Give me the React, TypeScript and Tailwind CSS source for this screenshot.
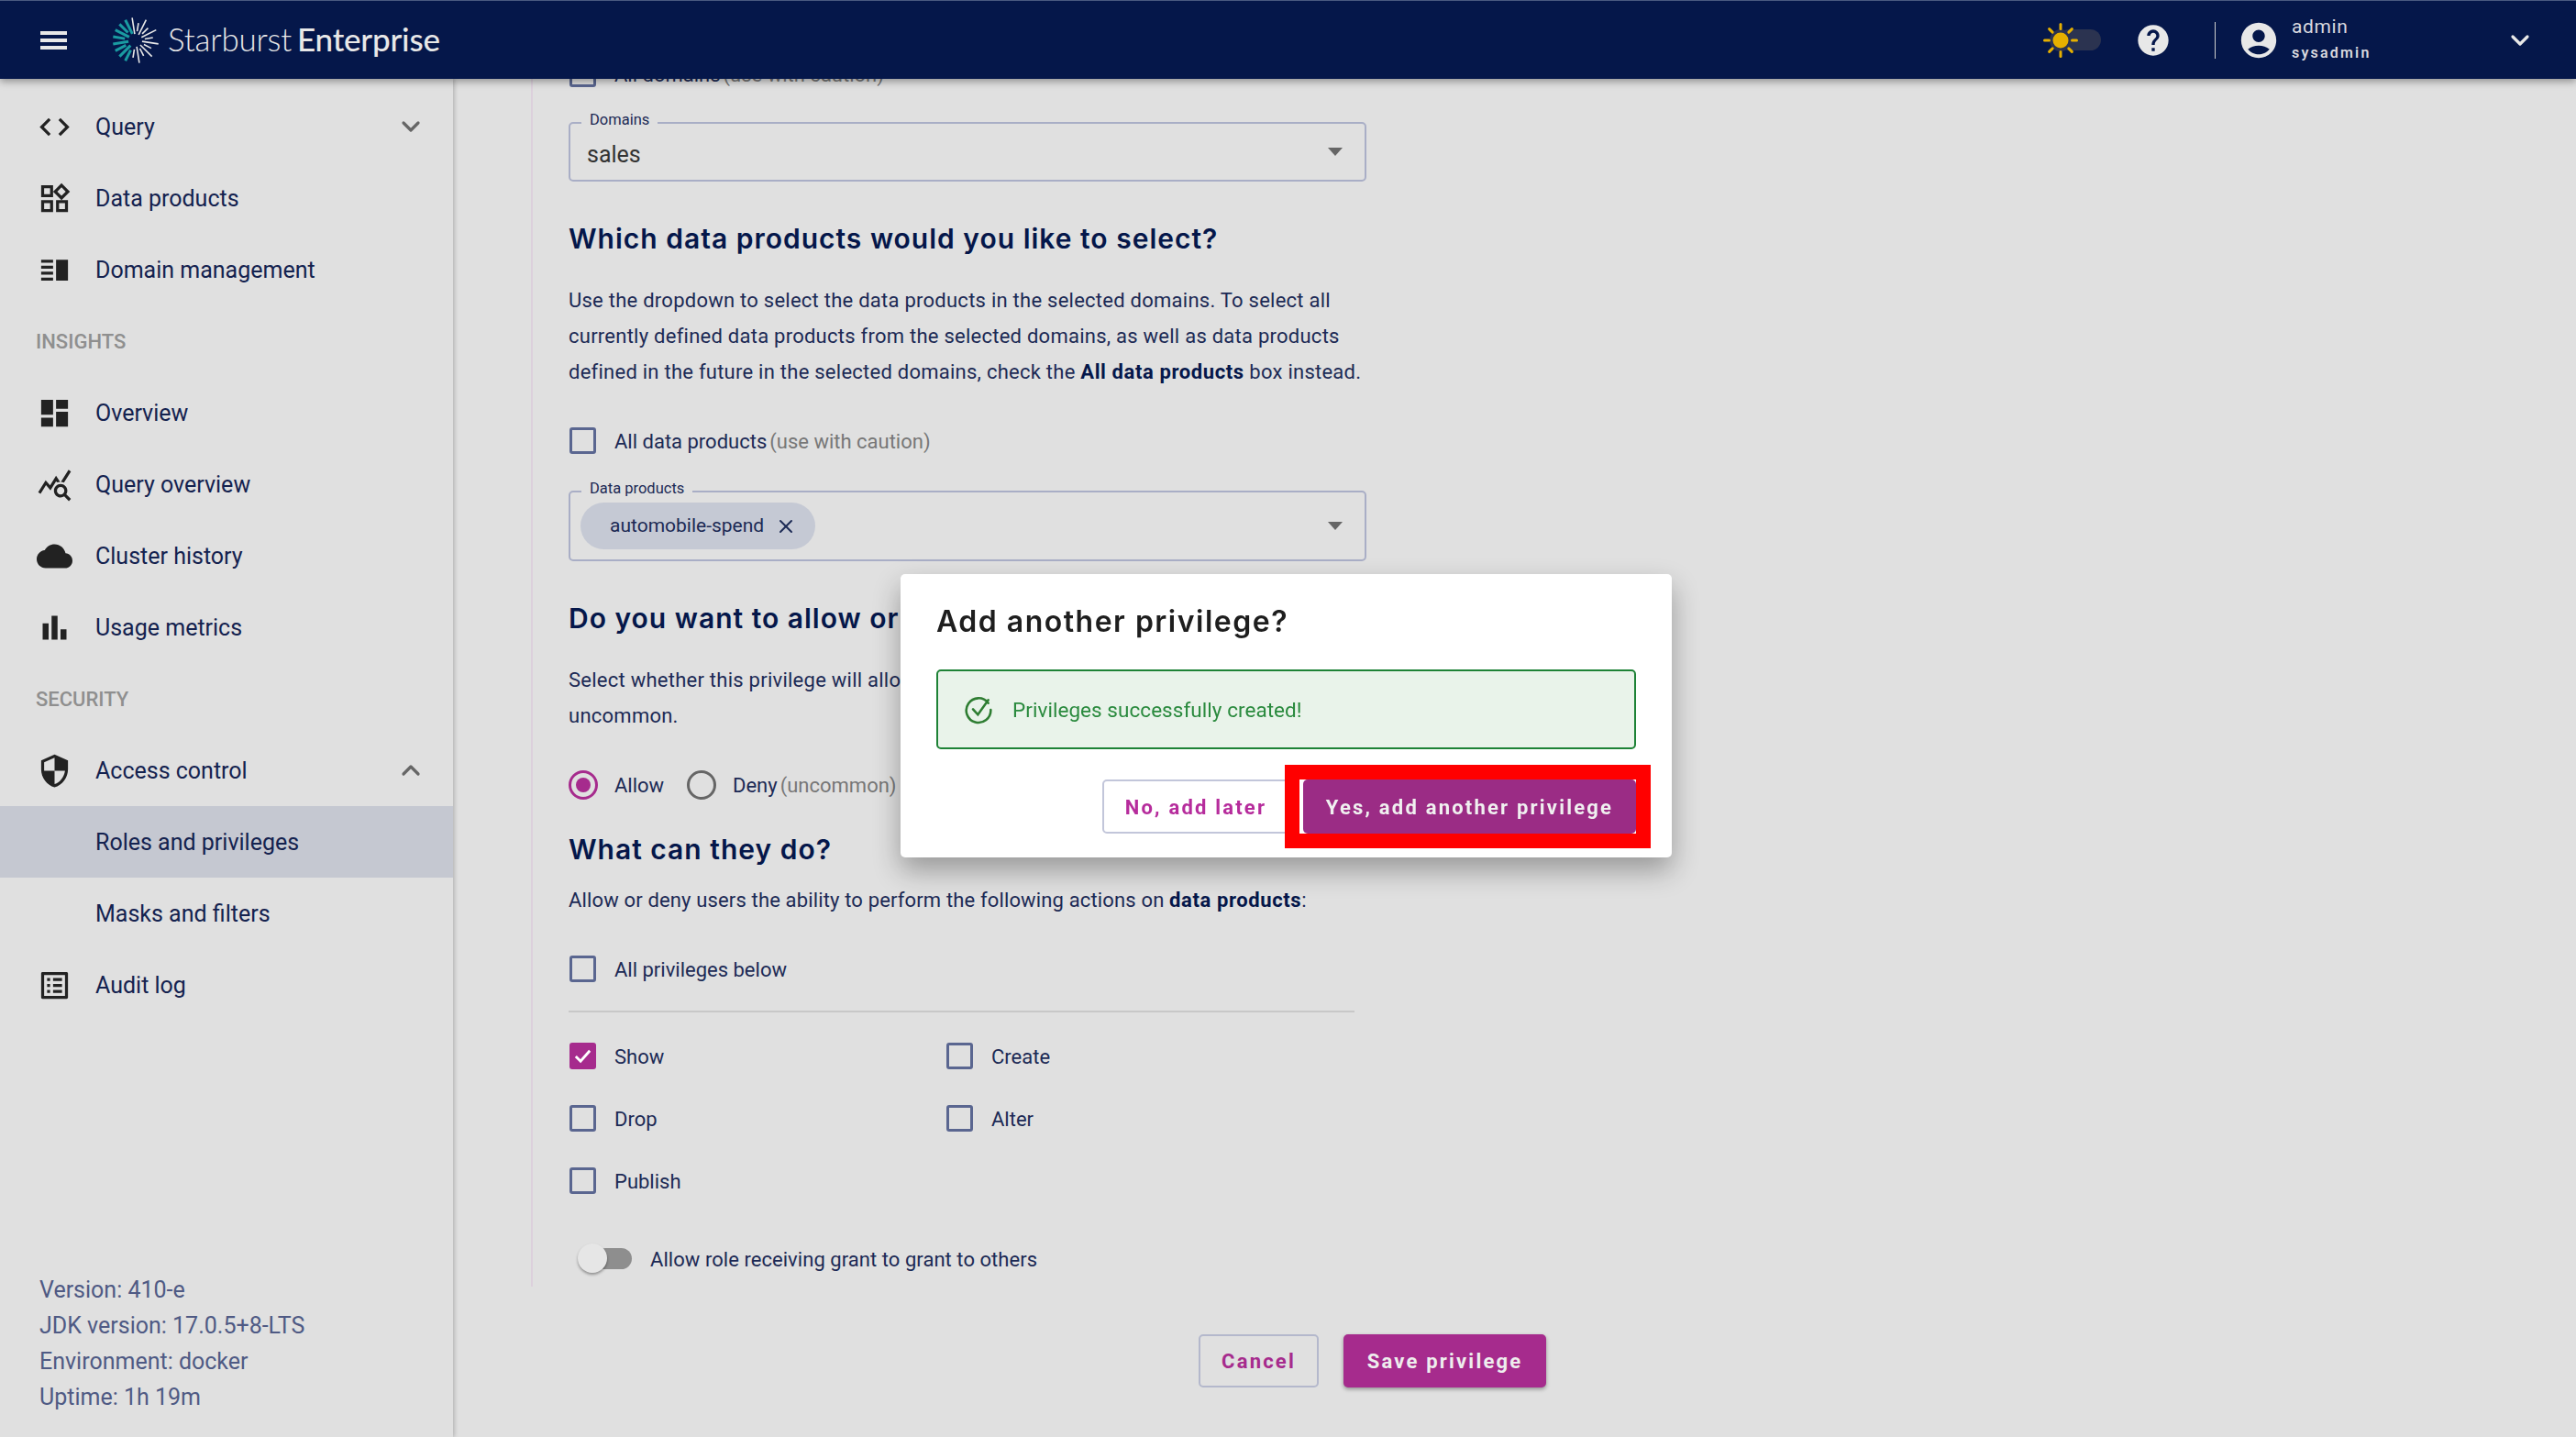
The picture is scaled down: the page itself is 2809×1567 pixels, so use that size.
import type { ReactNode } from "react";
import { ChevronDown, ChevronUp, X } from "lucide-react";

// logo rays: teal on the left side, thin white ones on the right
const burst = Array.from({ length: 20 }, (_, i) => {
  const deg = -99 + i * 18;
  const a = (deg * Math.PI) / 180;
  const teal = deg > 100;
  const r1 = teal ? (i % 2 ? 8 : 12) : i % 2 ? 10 : 7;
  const r2 = teal ? 25 : i % 2 ? 19 : 25;
  return {
    x1: 26 + Math.cos(a) * r1,
    y1: 26 + Math.sin(a) * r1,
    x2: 26 + Math.cos(a) * r2,
    y2: 26 + Math.sin(a) * r2,
    teal,
  };
});

function MatIcon({ d, size = 39, className = "" }: { d: string; size?: number; className?: string }) {
  return (
    <svg width={size} height={size} viewBox="0 0 24 24" fill="currentColor" className={className}>
      <path d={d} />
    </svg>
  );
}

const icons = {
  code: "M9.4 16.6L4.8 12l4.6-4.6L8 6l-6 6 6 6 1.4-1.4zm5.2 0l4.6-4.6-4.6-4.6L16 6l6 6-6 6-1.4-1.4z",
  widgets:
    "M16.66 4.52l2.83 2.83-2.83 2.83-2.83-2.83 2.83-2.83M9 5v4H5V5h4m10 10v4h-4v-4h4M9 15v4H5v-4h4m7.66-13.31L11 7.34 16.66 13l5.66-5.66-5.66-5.65zM11 3H3v8h8V3zm10 10h-8v8h8v-8zm-10 0H3v8h8v-8z",
  split: "M3 15h8v-2H3v2zm0 4h8v-2H3v2zm0-8h8V9H3v2zm0-6v2h8V5H3zm10 0h8v14h-8V5z",
  dashboard: "M3 13h8V3H3v10zm0 8h8v-6H3v6zm10 0h8V11h-8v10zm0-18v6h8V3h-8z",
  stats:
    "M19.88 18.47c.44-.7.7-1.51.7-2.39 0-2.49-2.01-4.5-4.5-4.5s-4.5 2.01-4.5 4.5 2.01 4.5 4.49 4.5c.88 0 1.7-.26 2.39-.7L21.58 23 23 21.58l-3.12-3.11zm-3.8.11c-1.38 0-2.5-1.12-2.5-2.5s1.12-2.5 2.5-2.5 2.5 1.12 2.5 2.5-1.12 2.5-2.5 2.5zm-.36-8.5c-.74.02-1.45.18-2.1.45l-.55-.83-3.8 6.18-3.01-3.52-3.63 5.81L1 17l5-8 3 3.5L13 6l2.72 4.08zm2.59.5c-.64-.28-1.33-.45-2.05-.49L21.38 2 23 3.18l-4.69 7.4z",
  cloud:
    "M19.35 10.04C18.67 6.59 15.64 4 12 4 9.11 4 6.6 5.64 5.35 8.04 2.34 8.36 0 10.91 0 14c0 3.31 2.69 6 6 6h13c2.76 0 5-2.24 5-5 0-2.64-2.05-4.78-4.65-4.96z",
  bars: "M4 9h4v11H4zm12 4h4v7h-4zm-6-9h4v16h-4z",
  shield: "M12 1L3 5v6c0 5.55 3.84 10.74 9 12 5.16-1.26 9-6.45 9-12V5l-9-4zm0 10.99h7c-.53 4.12-3.28 7.79-7 8.94V12H5V6.3l7-3.11v8.8z",
  list: "M19 5v14H5V5h14m1.1-2H3.9c-.5 0-.9.4-.9.9v16.2c0 .4.4.9.9.9h16.2c.4 0 .9-.5.9-.9V3.9c0-.5-.5-.9-.9-.9zM11 7h6v2h-6V7zm0 4h6v2h-6v-2zm0 4h6v2h-6zM7 7h2v2H7zm0 4h2v2H7zm0 4h2v2H7z",
  help: "M12 2C6.48 2 2 6.48 2 12s4.48 10 10 10 10-4.48 10-10S17.52 2 12 2zm1 17h-2v-2h2v2zm2.07-7.75l-.9.92C13.45 12.9 13 13.5 13 15h-2v-.5c0-1.1.45-2.1 1.17-2.83l1.24-1.26c.37-.36.59-.86.59-1.41 0-1.1-.9-2-2-2s-2 .9-2 2H8c0-2.21 1.79-4 4-4s4 1.79 4 4c0 .88-.36 1.68-.93 2.25z",
  account:
    "M12 2C6.48 2 2 6.48 2 12s4.48 10 10 10 10-4.48 10-10S17.52 2 12 2zm0 4c1.93 0 3.5 1.57 3.5 3.5S13.93 13 12 13s-3.5-1.57-3.5-3.5S10.07 6 12 6zm0 14c-2.03 0-4.43-.82-6.14-2.88C7.55 15.8 9.68 15 12 15s4.45.8 6.14 2.12C16.43 19.18 14.03 20 12 20z",
};

function NavRow({ icon, label, chevron, active }: { icon?: string; label: string; chevron?: "up" | "down"; active?: boolean }) {
  return (
    <div className={`flex h-[78px] items-center pr-[30px] pl-[40px] ${active ? "bg-[#c5c8d1]" : ""}`}>
      <span className="flex w-[64px] shrink-0 text-[#222222]">{icon && <MatIcon d={icon} />}</span>
      <span className="flex-1 pt-[2px] text-[25px] text-[#14224f]">{label}</span>
      {chevron === "down" && <ChevronDown size={32} strokeWidth={2.4} className="text-[#666666]" />}
      {chevron === "up" && <ChevronUp size={32} strokeWidth={2.4} className="text-[#666666]" />}
    </div>
  );
}

function SectionLabel({ children }: { children: ReactNode }) {
  return <div className="flex h-[78px] items-center pl-[39px] text-[22px] font-medium text-[#8f8f8f]">{children}</div>;
}

function Checkbox({ checked }: { checked?: boolean }) {
  if (checked) {
    return (
      <span className="flex h-[29px] w-[29px] shrink-0 items-center justify-center rounded-[3px] bg-[#a62b8d]">
        <svg width="23" height="23" viewBox="0 0 24 24" fill="none" stroke="#ffffff" strokeWidth="3">
          <path d="M4 12.5l5.5 5.5L20 6" />
        </svg>
      </span>
    );
  }
  return <span className="h-[29px] w-[29px] shrink-0 rounded-[3px] border-[3px] border-[#5a6690]" />;
}

function CheckRow({ label, checked, note }: { label: string; checked?: boolean; note?: string }) {
  return (
    <div className="flex h-[29px] items-center gap-[20px] pl-[1px]">
      <Checkbox checked={checked} />
      <span className="pt-[1px] text-[22px] text-[#1c2a55]">
        {label}
        {note && <span className="ml-[3px] text-[#777777]">{note}</span>}
      </span>
    </div>
  );
}

function Radio({ checked }: { checked?: boolean }) {
  return (
    <span className={`flex h-[32px] w-[32px] shrink-0 items-center justify-center rounded-full border-[3px] ${checked ? "border-[#a62b8d]" : "border-[#666666]"}`}>
      {checked && <span className="h-[16px] w-[16px] rounded-full bg-[#a62b8d]" />}
    </span>
  );
}

function Caret() {
  return <span className="h-0 w-0 border-x-[8px] border-t-[9px] border-x-transparent border-t-[#666666]" />;
}

function SelectField({ label, className, children }: { label: string; className: string; children: ReactNode }) {
  return (
    <div className={`relative flex w-[870px] items-center justify-between rounded-[5px] border-2 border-[#a9aec6] pr-[24px] ${className}`}>
      <span className="absolute -top-[15px] left-[12px] bg-[#e0e0e0] px-[9px] text-[16.5px] leading-[22px] text-[#1c2a55]">{label}</span>
      {children}
      <Caret />
    </div>
  );
}

function Heading({ children, className }: { children: ReactNode; className: string }) {
  return <h2 className={`font-['Inter',sans-serif] text-[30px] leading-[40px] font-semibold tracking-[1px] whitespace-nowrap text-[#05174a] ${className}`}>{children}</h2>;
}

function Sun() {
  const rays = [0, 45, 90, 135, 180, 225, 270, 315];
  return (
    <svg width="40" height="44" viewBox="-20 -22 40 44" className="absolute top-0 left-0">
      <circle r="12" fill="#2b3350" />
      <circle r="8.5" fill="#e6b000" />
      {rays.map((deg) => (
        <line key={deg} x1="0" y1="-12.5" x2="0" y2="-17.5" stroke="#e6b000" strokeWidth="3" strokeLinecap="round" transform={`rotate(${deg})`} />
      ))}
    </svg>
  );
}

export default function App() {
  return (
    <div className="flex h-[1567px] w-full flex-col overflow-hidden bg-[#e0e0e0] font-['Roboto',sans-serif]">
      <header className="relative z-20 flex h-[86px] shrink-0 items-center border-t border-[#4a5a80] bg-[#05174a] pr-[45px] pl-[44px] shadow-[0_3px_8px_rgba(0,0,0,0.35)]">
        <div className="flex h-[20px] w-[29px] flex-col justify-between">
          <span className="h-[4px] bg-[#e8e8e8]" />
          <span className="h-[4px] bg-[#e8e8e8]" />
          <span className="h-[4px] bg-[#e8e8e8]" />
        </div>
        <svg width="52" height="52" viewBox="0 0 52 52" className="ml-[49px]">
          {burst.map((r, i) => (
            <line key={i} x1={r.x1} y1={r.y1} x2={r.x2} y2={r.y2} stroke={r.teal ? "#1a9ba1" : "#e8e8e8"} strokeWidth={r.teal ? 3 : 1.6} />
          ))}
        </svg>
        <div className="-mt-[2px] ml-[9px] font-['Lato',sans-serif] text-[35px] tracking-[-0.2px] text-[#e8e8e8]">
          <span className="font-light">Starburst</span>
          <span className="ml-[6px] font-medium">Enterprise</span>
        </div>
        <div className="ml-auto flex items-center">
          <div className="relative mr-[37px] flex h-[44px] w-[64px] items-center">
            <span className="ml-[18px] h-[23px] w-[46px] rounded-full bg-[#2b3350]" />
            <Sun />
          </div>
          <MatIcon d={icons.help} size={40} className="text-[#e8e8e8]" />
          <span className="mx-[47px] h-[40px] w-[1.5px] bg-[#d0d0d0]" />
          <MatIcon d={icons.account} size={46} className="-ml-[23px] text-[#e8e8e8]" />
          <div className="ml-[13px] w-[233px] text-[#d9d9df]">
            <div className="-mt-[2px] text-[21px] leading-[26px] tracking-[0.6px]">admin</div>
            <div className="mt-[5px] text-[16px] leading-[22px] font-semibold tracking-[2.2px]">sysadmin</div>
          </div>
          <ChevronDown size={32} strokeWidth={2.4} className="text-[#e8e8e8]" />
        </div>
      </header>

      <div className="flex min-h-0 flex-1">
        <aside className="relative z-10 flex w-[494px] shrink-0 flex-col justify-between pt-[13px] pb-[24px] shadow-[2px_0_4px_rgba(0,0,0,0.18)]">
          <nav>
            <NavRow icon={icons.code} label="Query" chevron="down" />
            <NavRow icon={icons.widgets} label="Data products" />
            <NavRow icon={icons.split} label="Domain management" />
            <SectionLabel>INSIGHTS</SectionLabel>
            <NavRow icon={icons.dashboard} label="Overview" />
            <NavRow icon={icons.stats} label="Query overview" />
            <NavRow icon={icons.cloud} label="Cluster history" />
            <NavRow icon={icons.bars} label="Usage metrics" />
            <SectionLabel>SECURITY</SectionLabel>
            <NavRow icon={icons.shield} label="Access control" chevron="up" />
            <NavRow label="Roles and privileges" active />
            <NavRow label="Masks and filters" />
            <NavRow icon={icons.list} label="Audit log" />
          </nav>
          <div className="pl-[43px] text-[25px] leading-[39px] text-[#4f5a84]">
            <p>Version: 410-e</p>
            <p>JDK version: 17.0.5+8-LTS</p>
            <p>Environment: docker</p>
            <p>Uptime: 1h 19m</p>
          </div>
        </aside>

        <main className="min-w-0 flex-1 overflow-hidden pl-[85px]">
          <div className="h-[1337px] w-[1000px] border-l-2 border-[#dcd0dc] pl-[39px]">
            <div className="-mt-[20px]">
              <CheckRow label="All domains" note="(use with caution)" />
            </div>

            <SelectField label="Domains" className="mt-[38px] h-[65px] pl-[18px]">
              <span className="pt-[6px] text-[25px] text-[#333333]">sales</span>
            </SelectField>

            <Heading className="mt-[42px]">Which data products would you like to select?</Heading>
            <p className="mt-[28px] w-[900px] text-[22px] leading-[39px] tracking-[0.25px] text-[#1c2a55]">
              Use the dropdown to select the data products in the selected domains. To select all
              <br />
              currently defined data products from the selected domains, as well as data products
              <br />
              defined in the future in the selected domains, check the <b className="font-bold tracking-[0.6px] text-[#05174a]">All data products</b> box instead.
            </p>

            <div className="mt-[41px]">
              <CheckRow label="All data products" note="(use with caution)" />
            </div>

            <SelectField label="Data products" className="mt-[40px] h-[77px] pl-[11px]">
              <span className="flex h-[51px] items-center gap-[12px] rounded-full bg-[#c5c9d4] pr-[20px] pl-[32px] text-[21px] text-[#1c2a55]">
                automobile-spend
                <X size={24} strokeWidth={2} />
              </span>
            </SelectField>

            <Heading className="mt-[42px]">Do you want to allow or deny this privilege?</Heading>
            <p className="mt-[28px] text-[22px] leading-[39px] tracking-[0.25px] text-[#1c2a55]">
              Select whether this privilege will allow or deny access. Denying access is
              <br />
              uncommon.
            </p>

            <div className="mt-[40px] flex h-[32px] items-center">
              <Radio checked />
              <span className="ml-[18px] w-[79px] text-[22px] text-[#1c2a55]">Allow</span>
              <Radio />
              <span className="ml-[18px] text-[22px] text-[#1c2a55]">
                Deny<span className="ml-[3px] text-[#777777]">(uncommon)</span>
              </span>
            </div>

            <Heading className="mt-[34px]">What can they do?</Heading>
            <p className="mt-[16px] text-[22px] leading-[39px] tracking-[0.15px] text-[#1c2a55]">
              Allow or deny users the ability to perform the following actions on <b className="font-bold tracking-[0.6px] text-[#05174a]">data products</b>:
            </p>

            <div className="mt-[41px]">
              <CheckRow label="All privileges below" />
            </div>
            <div className="mt-[31px] h-[2px] w-[857px] bg-[#c8c8c8]" />

            <div className="mt-[33px] grid w-[857px] grid-cols-[411px_1fr] gap-y-[39px]">
              <CheckRow label="Show" checked />
              <CheckRow label="Create" />
              <CheckRow label="Drop" />
              <CheckRow label="Alter" />
              <CheckRow label="Publish" />
            </div>

            <div className="mt-[54px] flex h-[33px] items-center">
              <span className="relative ml-[10px] h-[23px] w-[59px]">
                <span className="absolute top-0 right-0 h-[23px] w-[40px] rounded-full bg-[#8e8e8e]" />
                <span className="absolute -top-[5px] left-0 h-[32px] w-[32px] rounded-full bg-[#e6e6e6] shadow-[0_2px_3px_rgba(0,0,0,0.35)]" />
              </span>
              <span className="ml-[20px] pt-[2px] text-[22px] tracking-[0.05px] text-[#1c2a55]">Allow role receiving grant to grant to others</span>
            </div>
          </div>

          <div className="mt-[52px] flex w-[1107px] justify-end gap-[27px]">
            <button className="h-[58px] w-[131px] rounded-[5px] border-2 border-[#b4b8cc] text-[22px] font-bold tracking-[2.2px] text-[#a62b8d]">Cancel</button>
            <button className="h-[58px] w-[221px] rounded-[5px] bg-[#a62b8d] text-[22px] font-bold tracking-[2.2px] text-[#eeeeee] shadow-[0_2px_4px_rgba(0,0,0,0.35)]">Save privilege</button>
          </div>
        </main>
      </div>

      <div className="fixed inset-0 z-30 flex items-center justify-center pr-[4px] pb-[6px]">
        <div className="flex h-[309px] w-[841px] flex-col rounded-[5px] bg-white px-[39px] pt-[32px] shadow-[0_14px_30px_rgba(0,0,0,0.32)]">
          <h3 className="font-['Inter',sans-serif] text-[32px] leading-[40px] font-semibold tracking-[1.5px] text-[#1e1e1e]">Add another privilege?</h3>
          <div className="mt-[32px] flex h-[87px] items-center rounded-[5px] border-2 border-[#1e8236] bg-[#e9f3ea] pl-[28px] text-[#2a8a3e]">
            <svg width="32" height="32" viewBox="0 0 24 24" fill="none" stroke="#2e7d32" strokeWidth="1.9" strokeLinecap="round">
              <path d="M20 6.5A10 10 0 1 0 22 12" />
              <path d="M7.5 11.5l4 4.5L20 4" />
            </svg>
            <span className="ml-[21px] pt-[2px] text-[22.5px] tracking-[0.05px]">Privileges successfully created!</span>
          </div>
          <div className="mt-[33px] flex justify-end">
            <button className="h-[59px] w-[204px] rounded-[5px] border-2 border-[#c2c6da] pt-[2px] text-[22px] font-bold tracking-[2.2px] text-[#b62c9c]">No, add later</button>
            <div className="relative ml-[11px] pl-[4px]">
              <button className="h-[59px] w-[363px] rounded-[5px] bg-[#9b2c85] pt-[2px] text-[22px] font-bold tracking-[2.2px] text-[#f0f0f0]">Yes, add another privilege</button>
              <span className="pointer-events-none absolute -inset-x-[16px] -top-[16px] -bottom-[16px] border-[16px] border-[#ff0000]" />
            </div>
          </div>
        </div>
      </div>
    </div>
  );
}
